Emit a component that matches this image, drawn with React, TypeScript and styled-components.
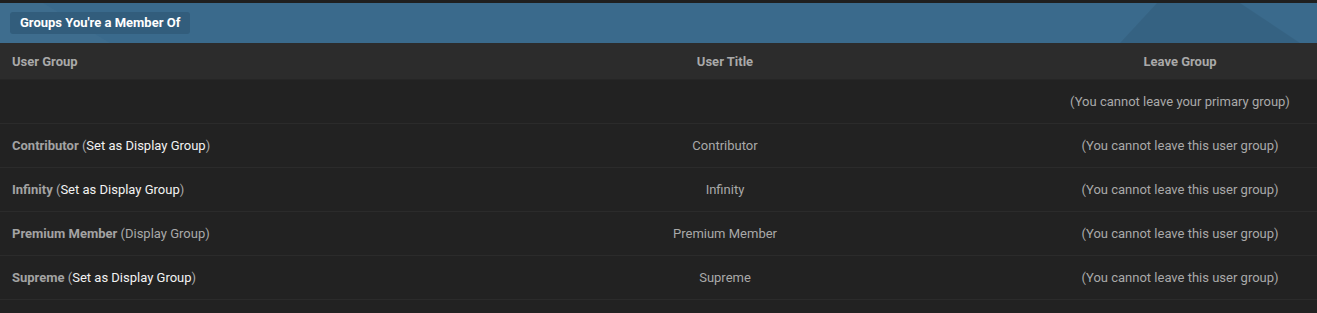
import styled, { createGlobalStyle } from "styled-components";

const GlobalStyle = createGlobalStyle`
  html, body {
    margin: 0;
    padding: 0;
    background: #222222;
    font-family: Roboto, "Liberation Sans", sans-serif;
  }
`;

const Block = styled.section`
  border-top: 3px solid #1f1f1f;
  background: #222222;
`;

const BlockHeader = styled.header`
  position: relative;
  display: flex;
  align-items: center;
  height: 40px;
  padding: 0 10px;
  background: #3a6a8c;
  overflow: hidden;

  /* faint lighter wedge top-left */
  &::before {
    content: "";
    position: absolute;
    left: 0;
    top: 0;
    width: 112px;
    height: 40px;
    background: rgba(255, 255, 255, 0.025);
    clip-path: polygon(0 0, 43px 0, 110px 40px, 0 40px);
  }

  /* darker trapezoid on the right */
  &::after {
    content: "";
    position: absolute;
    left: 1120px;
    top: 0;
    width: 180px;
    height: 40px;
    background: rgba(0, 0, 0, 0.07);
    clip-path: polygon(37px 0, 120px 0, 180px 40px, 0 40px);
  }
`;

const Badge = styled.h3`
  position: relative;
  z-index: 1;
  margin: 0;
  padding: 0 10px;
  height: 22px;
  line-height: 22px;
  border-radius: 3px;
  background: #325d7c;
  color: #ffffff;
  font-size: 13px;
  font-weight: 700;
`;

const Row = styled.div<{ $head?: boolean }>`
  display: grid;
  grid-template-columns: 407px 636px 1fr;
  align-items: center;
  height: ${(p) => (p.$head ? "36px" : "43px")};
  background: ${(p) => (p.$head ? "#2c2c2c" : "#222222")};
  border-bottom: 1px solid ${(p) => (p.$head ? "#262626" : "#2b2b2b")};
  font-size: 13px;
  font-weight: ${(p) => (p.$head ? 700 : 400)};
  color: #a9a9a9;
`;

const Cell = styled.div<{ $center?: boolean }>`
  padding: 0 12px;
  text-align: ${(p) => (p.$center ? "center" : "left")};
  white-space: nowrap;
`;

const GroupName = styled.b`
  color: #a3a3a3;
  font-weight: 700;
`;

const SetLink = styled.a`
  color: #f2f2f2;
  text-decoration: none;
`;

type Group = { name: string; title: string; display?: boolean };

const groups: Group[] = [
  { name: "Contributor", title: "Contributor" },
  { name: "Infinity", title: "Infinity" },
  { name: "Premium Member", title: "Premium Member", display: true },
  { name: "Supreme", title: "Supreme" },
];

export default function App() {
  return (
    <>
      <GlobalStyle />
      <Block>
        <BlockHeader>
          <Badge>Groups You're a Member Of</Badge>
        </BlockHeader>
        <Row $head>
          <Cell>User Group</Cell>
          <Cell $center>User Title</Cell>
          <Cell $center>Leave Group</Cell>
        </Row>
        <Row>
          <Cell />
          <Cell $center />
          <Cell $center>(You cannot leave your primary group)</Cell>
        </Row>
        {groups.map((g) => (
          <Row key={g.name}>
            <Cell>
              <GroupName>{g.name}</GroupName>{" "}
              {g.display ? "(Display Group)" : <>(<SetLink href="#">Set as Display Group</SetLink>)</>}
            </Cell>
            <Cell $center>{g.title}</Cell>
            <Cell $center>(You cannot leave this user group)</Cell>
          </Row>
        ))}
      </Block>
    </>
  );
}
